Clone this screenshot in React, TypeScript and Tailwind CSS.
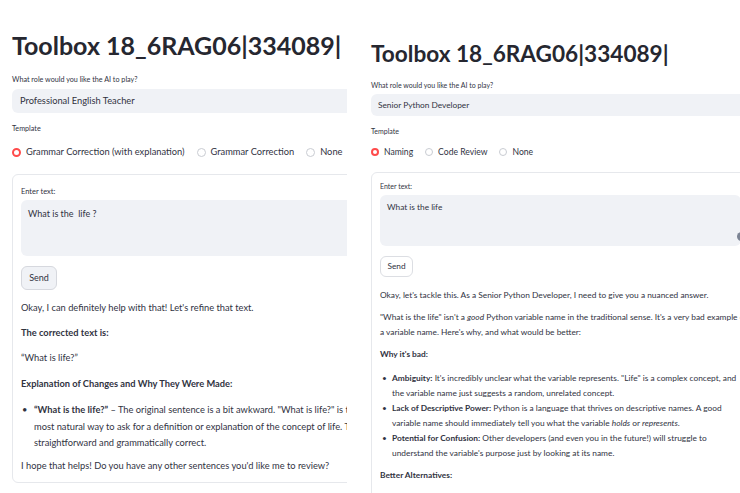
import React from "react";

const font = { fontFamily: "Lato, 'Liberation Sans', sans-serif" };

const Radio = ({ on, label, dot }: { on?: boolean; label: string; dot: string }) => (
  <div className="flex items-center gap-[5px]">
    <span
      className={
        on
          ? `${dot} rounded-full border-[2.5px] border-[#ff4b4b] bg-white shrink-0`
          : `${dot} rounded-full border border-[#c9ccd2] bg-white shrink-0`
      }
    />
    <span>{label}</span>
  </div>
);

const LeftPanel = () => (
  <div className="w-[347px] shrink-0 overflow-hidden">
    <div className="w-[440px] pl-3 pt-[29px] text-[#31333f]">
      <h1 className="text-[25px] leading-[32px] font-bold whitespace-nowrap text-[#262730]">Toolbox 18_6RAG06|334089|</h1>
      <div className="mt-[13px] text-[7.2px] leading-[12px]">What role would you like the AI to play?</div>
      <div className="mt-[3px] h-6 rounded-md bg-[#f0f2f6] pl-2 flex items-center text-[9.3px]">
        Professional English Teacher
      </div>
      <div className="mt-[10px] text-[7.2px] leading-[12px]">Template</div>
      <div className="mt-[10px] h-[14px] flex items-center gap-3 text-[9.3px] whitespace-nowrap">
        <Radio on label="Grammar Correction (with explanation)" dot="w-[9px] h-[9px]" />
        <Radio label="Grammar Correction" dot="w-[9px] h-[9px]" />
        <Radio label="None" dot="w-[9px] h-[9px]" />
      </div>
      <div className="mt-[15px] h-[309px] rounded-md border border-[#e6e8ec] pl-[8px] pt-[11px]">
        <div className="text-[7.5px] leading-[11px]">Enter text:</div>
        <div className="mt-[3px] h-14 rounded-md bg-[#f0f2f6] pl-[7px] pt-[7px] text-[9px] leading-[14px] whitespace-pre">What is the  life ?</div>
        <button className="mt-[10px] h-6 w-9 rounded-md border border-[#d6d8de] bg-[#f0f2f6] text-[9px]">Send</button>
        <div className="mt-[10px] text-[9.3px] leading-[16px] whitespace-nowrap">
          <p>Okay, I can definitely help with that! Let's refine that text.</p>
          <p className="mt-[9px] font-bold">The corrected text is:</p>
          <p className="mt-[9px]">“What is life?”</p>
          <p className="mt-[10px] font-bold">Explanation of Changes and Why They Were Made:</p>
          <div className="mt-[10px] flex leading-[16.5px]">
            <span className="w-[13px] pl-[1px] shrink-0">•</span>
            <div>
              <div>
                <b>“What is the life?”</b> – The original sentence is a bit awkward. "What is life?" is the
              </div>
              <div>most natural way to ask for a definition or explanation of the concept of life. This is</div>
              <div>straightforward and grammatically correct.</div>
            </div>
          </div>
          <p className="mt-[6px]">I hope that helps! Do you have any other sentences you'd like me to review?</p>
        </div>
      </div>
    </div>
  </div>
);

const bullets = [
  [
    "Ambiguity:",
    <>It's incredibly unclear what the variable represents. "Life" is a complex concept, and</>,
    <>the variable name just suggests a random, unrelated concept.</>,
  ],
  [
    "Lack of Descriptive Power:",
    <>Python is a language that thrives on descriptive names. A good</>,
    <>
      variable name should immediately tell you what the variable <i>holds</i> or <i>represents</i>.
    </>,
  ],
  [
    "Potential for Confusion:",
    <>Other developers (and even you in the future!) will struggle to</>,
    <>understand the variable's purpose just by looking at its name.</>,
  ],
];

const RightPanel = () => (
  <div className="flex-1 overflow-hidden">
    <div className="w-[440px] pl-[9px] pt-[39px] text-[#31333f]">
      <h1 className="text-[22.6px] leading-[30px] font-bold whitespace-nowrap text-[#262730]">Toolbox 18_6RAG06|334089|</h1>
      <div className="mt-[11px] text-[7px] leading-[11px]">What role would you like the AI to play?</div>
      <div className="mt-[3px] h-[22px] rounded-md bg-[#f0f2f6] pl-[7px] flex items-center text-[8.3px]">
        Senior Python Developer
      </div>
      <div className="mt-[10px] text-[7px] leading-[11px]">Template</div>
      <div className="mt-[9px] h-3 flex items-center gap-3 text-[8.6px] whitespace-nowrap">
        <Radio on label="Naming" dot="w-2 h-2" />
        <Radio label="Code Review" dot="w-2 h-2" />
        <Radio label="None" dot="w-2 h-2" />
      </div>
      <div className="mt-[14px] h-[340px] rounded-md border border-[#e6e8ec] pl-2 pt-2">
        <div className="text-[7px] leading-[11px]">Enter text:</div>
        <div className="relative mt-[3px] h-[51px] w-[361px] rounded-md bg-[#f0f2f6] pl-[7px] pt-[6px] text-[8.3px] leading-[12px]">
          What is the life
          <span className="absolute right-[-5px] bottom-[5px] w-[9px] h-[9px] rounded-full bg-[#7c8494] flex items-center justify-center">
            <span className="w-[4px] h-[2px] rounded-sm bg-white" />
          </span>
        </div>
        <button className="mt-[10px] h-[21px] w-[33px] rounded-md border border-[#dcdee3] bg-white text-[8.3px]">Send</button>
        <div className="mt-[11px] text-[8.35px] leading-[15px] whitespace-nowrap">
          <p>Okay, let's tackle this. As a Senior Python Developer, I need to give you a nuanced answer.</p>
          <div className="mt-[7px]">
            <div>
              "What is the life" isn't a <i>good</i> Python variable name in the traditional sense. It's a very bad example of
            </div>
            <div>a variable name. Here's why, and what would be better:</div>
          </div>
          <p className="mt-[7px] font-bold">Why it's bad:</p>
          <ul className="mt-[9px] leading-[14.5px]">
            {bullets.map((b, i) => (
              <li key={i} className={i ? "mt-px flex" : "flex"}>
                <span className="w-[12px] pl-[2px] shrink-0">•</span>
                <div>
                  <div>
                    <b>{b[0]}</b> {b[1]}
                  </div>
                  <div>{b[2]}</div>
                </div>
              </li>
            ))}
          </ul>
          <p className="mt-[8px] font-bold">Better Alternatives:</p>
        </div>
      </div>
    </div>
  </div>
);

export default function App() {
  return (
    <div className="w-[740px] h-[493px] overflow-hidden bg-white flex" style={font}>
      <LeftPanel />
      <div className="w-[15px] shrink-0" />
      <RightPanel />
    </div>
  );
}
